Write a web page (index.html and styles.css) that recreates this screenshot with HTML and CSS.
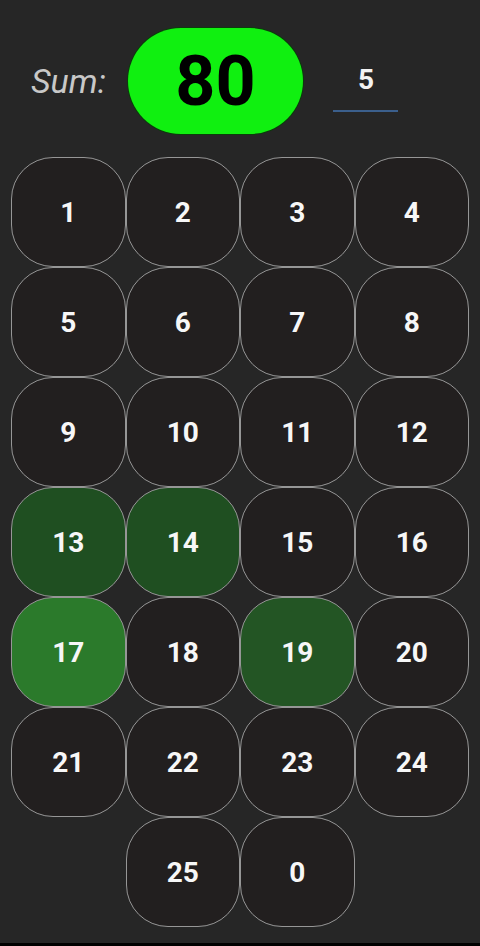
FILE: index.html
```html
<!DOCTYPE html>
<html>
<head>
<meta charset="utf-8">
<link rel="stylesheet" href="styles.css">
</head>
<body>
<div class="screen">
  <header class="top">
    <span class="label">Sum:</span>
    <div class="sum-pill">80</div>
    <div class="input"><span class="input-val">5</span></div>
  </header>
  <main class="grid">
    <div class="cell">1</div>
    <div class="cell">2</div>
    <div class="cell">3</div>
    <div class="cell">4</div>
    <div class="cell">5</div>
    <div class="cell">6</div>
    <div class="cell">7</div>
    <div class="cell">8</div>
    <div class="cell">9</div>
    <div class="cell">10</div>
    <div class="cell">11</div>
    <div class="cell">12</div>
    <div class="cell sel">13</div>
    <div class="cell sel">14</div>
    <div class="cell">15</div>
    <div class="cell">16</div>
    <div class="cell sel-bright">17</div>
    <div class="cell">18</div>
    <div class="cell sel-mid">19</div>
    <div class="cell">20</div>
    <div class="cell">21</div>
    <div class="cell">22</div>
    <div class="cell">23</div>
    <div class="cell">24</div>
    <div class="cell col2">25</div>
    <div class="cell">0</div>
  </main>
  <div class="bottom-bar"></div>
</div>
</body>
</html>
```
FILE: styles.css
```css
html, body {
  margin: 0;
  padding: 0;
  background: #262626;
}
.screen {
  width: 480px;
  height: 946px;
  display: flex;
  flex-direction: column;
  font-family: Roboto, "Liberation Sans", sans-serif;
  background: #262626;
}
.top {
  height: 157px;
  box-sizing: border-box;
  padding: 28px 0 23px 31px;
  display: flex;
  align-items: center;
}
.label {
  font-style: italic;
  font-weight: 400;
  font-size: 34px;
  color: #c8c8c8;
  width: 97px;
}
.sum-pill {
  width: 175px;
  height: 106px;
  border-radius: 53px;
  background: #10f010;
  box-shadow: 0 0 0 1px #0b3d0b;
  display: flex;
  align-items: center;
  justify-content: center;
  font-size: 70px;
  font-weight: 700;
  color: #000;
  line-height: 1;
}
.input {
  margin-left: 30px;
  width: 65px;
  height: 60px;
  box-sizing: border-box;
  border-bottom: 2px solid #3b5f8c;
  display: flex;
  justify-content: center;
  padding-top: 14px;
  margin-top: 2px;
}
.input-val {
  font-size: 28px;
  font-weight: 700;
  color: #f2f2f2;
  line-height: 1;
  margin-left: 1px;
}
.grid {
  margin-left: 11px;
  width: 458px;
  display: grid;
  grid-template-columns: repeat(4, 1fr);
  grid-auto-rows: 110px;
}
.cell {
  box-sizing: border-box;
  border: 1px solid #969696;
  border-radius: 42px;
  background: #221f1f;
  color: #f7f7f7;
  font-size: 28px;
  font-weight: 700;
  display: flex;
  align-items: center;
  justify-content: center;
}
.cell.sel {
  background: #1f4f21;
}
.cell.sel-bright {
  background: #2b7a2b;
}
.cell.sel-mid {
  background: #235524;
}
.cell.col2 {
  grid-column: 2;
}
.bottom-bar {
  margin-top: auto;
  height: 3px;
  background: #000;
}
```
